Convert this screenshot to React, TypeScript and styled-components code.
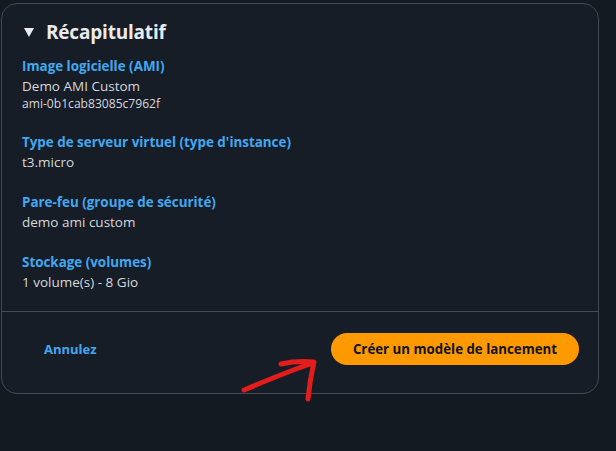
import React from "react";
import styled, { createGlobalStyle } from "styled-components";

const Global = createGlobalStyle`
  html, body { margin: 0; padding: 0; background: #141a21; }
  body { width: 616px; height: 451px; overflow: hidden; font-family: "Open Sans", "Noto Sans", sans-serif; }
`;

const Page = styled.div`
  position: relative;
  width: 616px;
  height: 451px;
  padding: 3px 0 0 1px;
  box-sizing: border-box;
`;

const Card = styled.section`
  width: 598px;
  box-sizing: border-box;
  border: 1px solid #434a55;
  border-radius: 16px;
  background: #161d27;
`;

const Body = styled.div`
  padding: 16px 20px 19px 20px;
  display: flex;
  flex-direction: column;
`;

const Header = styled.h2`
  margin: 0 0 12px 0;
  display: flex;
  align-items: center;
  gap: 12px;
  font-size: 19px;
  font-weight: 700;
  line-height: 24px;
  color: #e9ebed;
  letter-spacing: -0.2px;
`;

const Caret = styled.span`
  width: 0;
  height: 0;
  margin-left: 2px;
  border-left: 5.5px solid transparent;
  border-right: 5.5px solid transparent;
  border-top: 9px solid #e9ebed;
`;

const Group = styled.div`
  display: flex;
  flex-direction: column;
  margin-bottom: 20px;
  &:last-child { margin-bottom: 0; }
`;

const Label = styled.div`
  font-size: 13.4px;
  font-weight: 700;
  line-height: 20px;
  color: #42a8f0;
`;

const Value = styled.div<{ $small?: boolean }>`
  font-size: ${(p) => (p.$small ? "12.1px" : "13.5px")};
  line-height: ${(p) => (p.$small ? "16px" : "20px")};
  color: #d5d8dc;
`;

const Footer = styled.div`
  border-top: 1px solid #434a55;
  padding: 21px 19px 28px 42px;
  display: flex;
  align-items: center;
  justify-content: space-between;
`;

const CancelLink = styled.a`
  font-size: 13px;
  font-weight: 700;
  color: #42a8f0;
  text-decoration: none;
  cursor: pointer;
`;

const PrimaryButton = styled.button`
  height: 32px;
  padding: 0;
  width: 248px;
  border: none;
  border-radius: 16px;
  background: #ff9900;
  color: #0f141a;
  font-family: "Open Sans", "Noto Sans", sans-serif;
  font-size: 13.3px;
  font-weight: 700;
  cursor: pointer;
`;

const Annotation = styled.svg`
  position: absolute;
  left: 230px;
  top: 350px;
  pointer-events: none;
`;

const groups = [
  { label: "Image logicielle (AMI)", value: "Demo AMI Custom", extra: "ami-0b1cab83085c7962f" },
  { label: "Type de serveur virtuel (type d'instance)", value: "t3.micro" },
  { label: "Pare-feu (groupe de sécurité)", value: "demo ami custom" },
  { label: "Stockage (volumes)", value: "1 volume(s) - 8 Gio" },
];

export default function App() {
  return (
    <>
      <Global />
      <Page>
        <Card>
          <Body>
            <Header>
              <Caret />
              Récapitulatif
            </Header>
            {groups.map((g) => (
              <Group key={g.label}>
                <Label>{g.label}</Label>
                <Value>{g.value}</Value>
                {g.extra && <Value $small>{g.extra}</Value>}
              </Group>
            ))}
          </Body>
          <Footer>
            <CancelLink>Annulez</CancelLink>
            <PrimaryButton>Créer un modèle de lancement</PrimaryButton>
          </Footer>
        </Card>
        <Annotation width="100" height="60" viewBox="0 0 100 60">
          <path
            d="M14 40 C 40 29, 62 20, 83 13 M51 14 C 60 12, 72 11, 84 12 C 81 25, 79 38, 78 49"
            fill="none"
            stroke="#e31c1c"
            strokeWidth="5"
            strokeLinecap="round"
            strokeLinejoin="round"
          />
        </Annotation>
      </Page>
    </>
  );
}
